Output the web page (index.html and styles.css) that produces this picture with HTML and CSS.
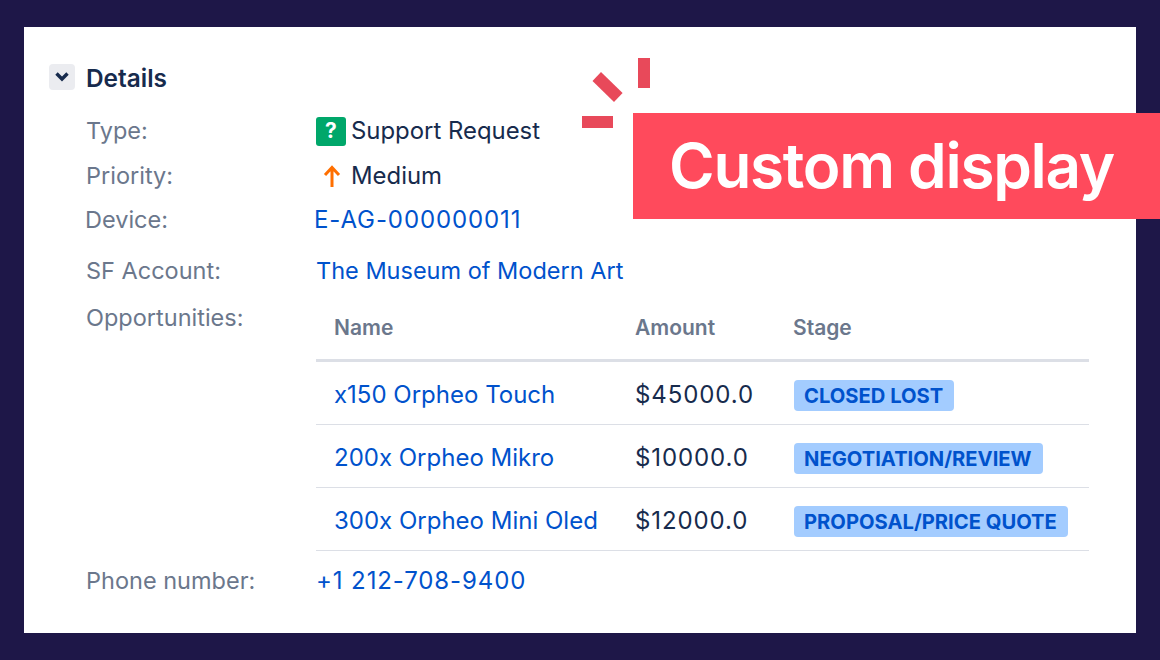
FILE: index.html
```html
<!DOCTYPE html>
<html lang="en">

<head>
    <meta charset="utf-8">
    <title>Custom display</title>
    <link rel="stylesheet" href="styles.css">
</head>

<body>
    <div class="card">
        <div class="details-head">
            <span class="toggle">
                <svg width="14" height="10" viewBox="0 0 14 10"><path d="M1.500 1.500 L7 7 L12.500 1.500" fill="none" stroke="#172b4d" stroke-width="3.4"/></svg>
            </span>
            <h2>Details</h2>
        </div>

        <div class="field field-type">
            <span class="label">Type:</span>
            <span class="value"><span class="type-icon">?</span>Support Request</span>
        </div>
        <div class="field field-priority">
            <span class="label">Priority:</span>
            <span class="value">
                <svg class="priority-icon" width="20" height="24" viewBox="0 0 20 24"><path d="M10 23 V4 M3 11 L10 3.500 L17 11" fill="none" stroke="#ff6f00" stroke-width="3"/></svg>
                Medium
            </span>
        </div>
        <div class="field field-device">
            <span class="label">Device:</span>
            <a class="value link num">E-AG-000000011</a>
        </div>
        <div class="field field-account">
            <span class="label">SF Account:</span>
            <a class="value link">The Museum of Modern Art</a>
        </div>
        <div class="field field-opps">
            <span class="label">Opportunities:</span>
            <table class="opps">
                <thead>
                    <tr>
                        <th class="col-name">Name</th>
                        <th class="col-amount">Amount</th>
                        <th>Stage</th>
                    </tr>
                </thead>
                <tbody>
                    <tr>
                        <td><a class="link">x150 Orpheo Touch</a></td>
                        <td class="num">$45000.0</td>
                        <td><span class="lozenge">CLOSED LOST</span></td>
                    </tr>
                    <tr>
                        <td><a class="link">200x Orpheo Mikro</a></td>
                        <td class="num">$10000.0</td>
                        <td><span class="lozenge">NEGOTIATION/REVIEW</span></td>
                    </tr>
                    <tr>
                        <td><a class="link">300x Orpheo Mini Oled</a></td>
                        <td class="num">$12000.0</td>
                        <td><span class="lozenge">PROPOSAL/PRICE QUOTE</span></td>
                    </tr>
                </tbody>
            </table>
        </div>
        <div class="field field-phone">
            <span class="label">Phone number:</span>
            <a class="value link num">+1 212-708-9400</a>
        </div>

        <svg class="sparks" width="70" height="72" viewBox="0 0 70 72">
            <rect x="56" y="0" width="12" height="30" fill="#e8495a"/>
            <polygon points="19,14 10.500,23 32,44 40.600,35" fill="#e8495a"/>
            <rect x="0" y="58" width="31" height="12" fill="#e8495a"/>
        </svg>
        <div class="banner">Custom display</div>
    </div>
</body>

</html>
```

FILE: styles.css
```css
body {
    background-color: #1e1748;
    margin: 0;
    height: 660px;
    overflow: hidden;
    font-family: 'Inter', 'Liberation Sans', sans-serif;
    font-size: 23.5px;
    color: #172b4d;
}

.card {
    position: relative;
    box-sizing: border-box;
    width: 1112px;
    height: 606px;
    margin: 27px 24px 0;
    padding: 37px 47px 0 25px;
    background-color: #fff;
}

.details-head {
    display: flex;
    align-items: center;
    height: 26px;
    margin-bottom: 26px;
}

.details-head h2 {
    margin: 2px 0 0;
    font-size: 24.4px;
    font-weight: 600;
}

.toggle {
    display: flex;
    align-items: center;
    justify-content: center;
    width: 26px;
    height: 26px;
    margin-right: 11px;
    border-radius: 4px;
    background-color: #ebecf0;
}

.field {
    display: flex;
    padding-left: 37px;
    line-height: 30px;
}

.label {
    flex: 0 0 230px;
    color: #6b778c;
}

.value {
    display: flex;
    align-items: center;
}

.link {
    color: #0052cc;
}

.num {
    font-size: 24px;
    letter-spacing: 0.9px;
}

.type-icon {
    display: flex;
    align-items: center;
    justify-content: center;
    width: 30px;
    height: 29px;
    margin-right: 5px;
    border-radius: 3px;
    background-color: #00a76a;
    color: #fff;
    font-size: 21px;
    font-weight: 700;
}

.field-type .value,
.field-priority .value {
    font-size: 23.9px;
}

.priority-icon {
    margin: 0 9px 0 6px;
}

.field-priority { margin-top: 15px; }
.field-device { margin-top: 14px; padding-left: 36px; }
.field-device .value { margin-left: -1px; }
.field-account { margin-top: 21px; }
.field-opps { margin-top: 17px; }
.field-phone { margin-top: 15px; }

.opps {
    flex: 1;
    border-collapse: collapse;
    table-layout: fixed;
}

.opps th {
    height: 46px;
    padding: 10px 0 0 0;
    border-bottom: 3px solid #dcdfe6;
    color: #6b778c;
    font-size: 21px;
    font-weight: 600;
    text-align: left;
    vertical-align: top;
}

.opps td {
    height: 58px;
    padding: 4px 0 0;
    border-bottom: 1px solid #dcdfe6;
    font-size: 24px;
}

.opps th:first-child,
.opps td:first-child {
    padding-left: 18px;
}

.col-name { width: 301px; }
.col-amount { width: 158px; }

.opps td.num {
    letter-spacing: 0.9px;
}

.lozenge {
    display: inline-block;
    margin-left: 1px;
    padding: 0 11px 0 10px;
    border-radius: 4px;
    background-color: #a3ccff;
    color: #0052cc;
    font-size: 20.2px;
    font-weight: 700;
    line-height: 31px;
    vertical-align: middle;
}

.sparks {
    position: absolute;
    left: 558px;
    top: 31px;
}

.banner {
    position: absolute;
    left: 609px;
    right: -24px;
    top: 86px;
    height: 106px;
    padding-left: 36px;
    background-color: #ff4a5c;
    color: #fff;
    font-size: 62px;
    font-weight: 600;
    letter-spacing: -1.3px;
    line-height: 106px;
}
```
